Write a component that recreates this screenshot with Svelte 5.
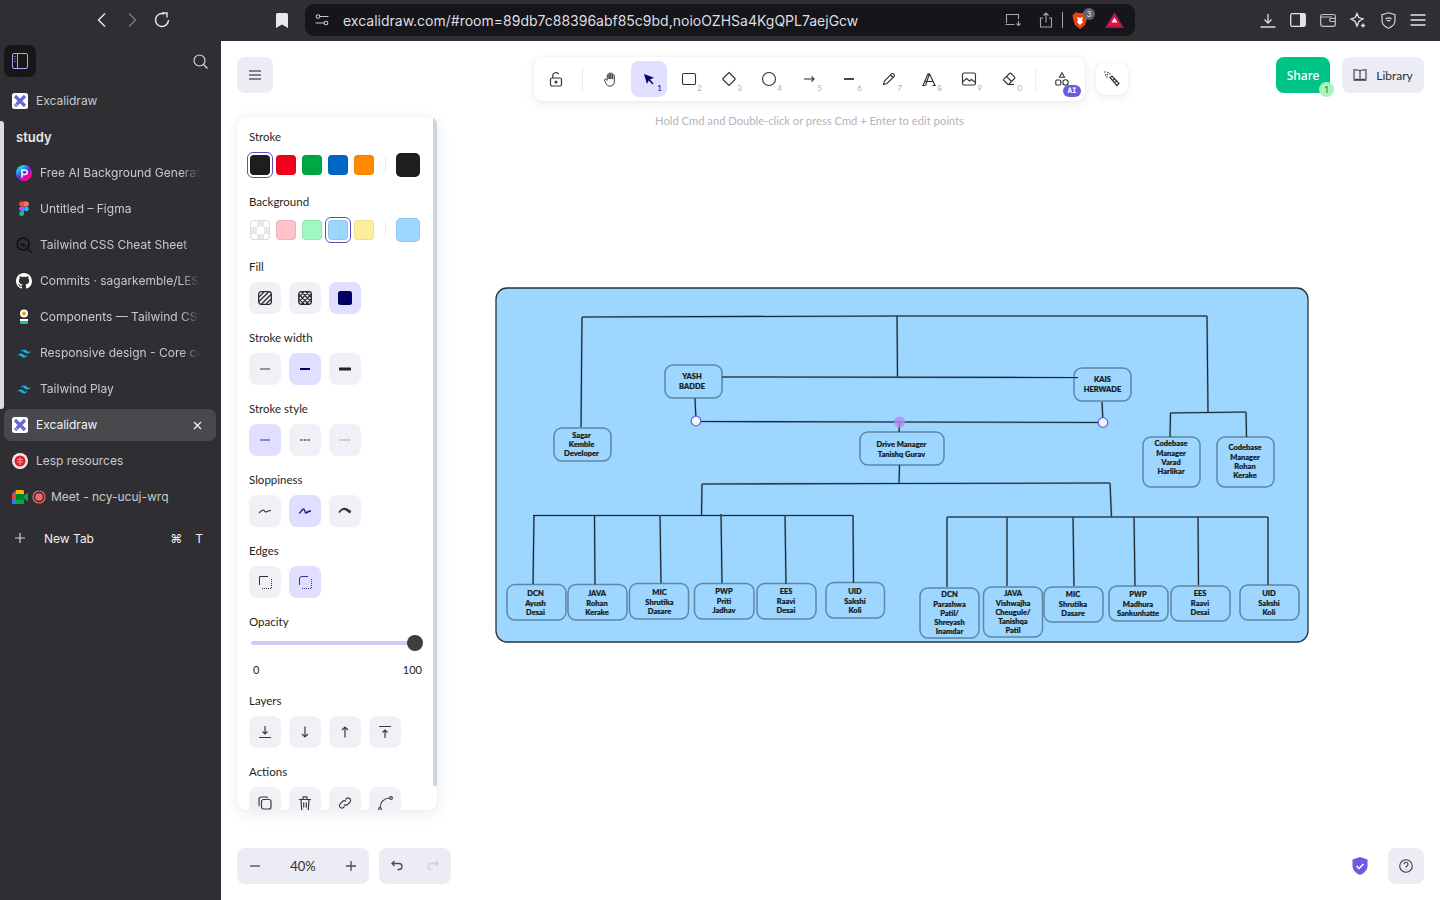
<script>
  const tabs = [
    { kind: 'perplexity', title: 'Free AI Background Generator' },
    { kind: 'figma', title: 'Untitled – Figma' },
    { kind: 'search', title: 'Tailwind CSS Cheat Sheet' },
    { kind: 'github', title: 'Commits · sagarkemble/LESP' },
    { kind: 'components', title: 'Components — Tailwind CSS' },
    { kind: 'tailwind', title: 'Responsive design - Core concepts' },
    { kind: 'tailwind', title: 'Tailwind Play' }
  ];

  const tools = [
    { key: 1, active: true, paths: [] },
    { key: 2, paths: ['M5 4.500h10a1.500 1.500 0 0 1 1.500 1.500v8a1.500 1.500 0 0 1-1.500 1.500H5A1.500 1.500 0 0 1 3.500 14V6A1.500 1.500 0 0 1 5 4.500z'] },
    { key: 3, paths: ['M10 3.500l6 6a.7.7 0 0 1 0 1l-6 6-6-6a.7.7 0 0 1 0-1z'] },
    { key: 4, paths: ['M10 3.500a6.500 6.500 0 1 0 0 13 6.500 6.500 0 0 0 0-13z'] },
    { key: 5, paths: ['M5 10h10', 'M12.500 7.500l2.500 2.500-2.500 2.500'] },
    { key: 6, paths: ['M5 10h10'], thick: true },
    { key: 7, paths: ['M4.500 15.500l1-3.500 7-7a1.300 1.300 0 0 1 2 0l.5.5a1.300 1.300 0 0 1 0 2l-7 7z', 'M11.500 6l2.500 2.500'] },
    { key: 8, text: true, paths: [] },
    { key: 9, paths: ['M5 4h10a1.500 1.500 0 0 1 1.500 1.500v9A1.500 1.500 0 0 1 15 16H5a1.500 1.500 0 0 1-1.500-1.500v-9A1.500 1.500 0 0 1 5 4z', 'M3.500 13l4-3.500 3 2.500 2-1.500 4 3', 'M12.500 7.500h.01'] },
    { key: 0, paths: ['M9 15.500h6', 'M9 15.500L5 11.500a1.200 1.200 0 0 1 0-1.700L10.500 4.500a1.200 1.200 0 0 1 1.700 0l3.300 3.300a1.200 1.200 0 0 1 0 1.700L10 15', 'M7.500 7.500l5 5'] }
  ];

  const strokeColors = ['#1e1e1e', '#f5001c', '#00a844', '#0068c4', '#ff8a00'];
  const bgColors = ['transparent', '#ffc2c8', '#a0f7bf', '#9dd6fe', '#ffee99'];

  const lines = [
    'M582 317L897 316L1207 316', 'M582 317L581 427', 'M897 316L897.500 377', 'M722 377L1078 377.500',
    'M695 398L696 421', 'M696 421.500L899 422L1103 422.500', 'M1102 402L1103 422', 'M899.500 422L899 432',
    'M899.500 465L899 484', 'M1207 316L1208 412', 'M1170 413L1208 412.500L1246 412', 'M1170.500 413L1170 437',
    'M1246 412L1246.500 437', 'M702 484L899 483.500L1110 483', 'M702 484L701.500 516', 'M1110 483L1111.500 517',
    'M533 515.500L853 515.500', 'M534 516L533 584', 'M594.500 515L595 584.500', 'M660 515L661 583', 'M721 514L722 583',
    'M785 515L786 584', 'M853 515L853.500 583', 'M947 517L1268 517', 'M947 517L947 587', 'M1007 517L1007 586',
    'M1073 517L1074 586', 'M1134 517L1135 586', 'M1198 517L1198.500 585', 'M1268 517L1268 585'
  ];

  const boxes = [
    { x: 665, y: 365, r: 722, b: 398 },
    { x: 554, y: 428, r: 611, b: 461 },
    { x: 860, y: 432, r: 944, b: 465 },
    { x: 1074, y: 368, r: 1131, b: 401 },
    { x: 1143, y: 437, r: 1200, b: 487 },
    { x: 1217, y: 437, r: 1274, b: 487 },
    { x: 507, y: 584.500, r: 566, b: 620 },
    { x: 568, y: 584.500, r: 627, b: 620 },
    { x: 629.500, y: 583.500, r: 688.500, b: 619 },
    { x: 694.500, y: 583.500, r: 754, b: 619 },
    { x: 757, y: 583.500, r: 816, b: 619 },
    { x: 826, y: 582.500, r: 884.500, b: 618 },
    { x: 920, y: 588, r: 979, b: 638 },
    { x: 983.500, y: 587, r: 1042.500, b: 637 },
    { x: 1044, y: 587, r: 1103, b: 622 },
    { x: 1109, y: 586, r: 1168, b: 621 },
    { x: 1171, y: 586, r: 1230, b: 621 },
    { x: 1240, y: 585, r: 1299, b: 620 }
  ];

  const labels = [
    { x: 692, rows: [[376, 'YASH'], [386, 'BADDE']] },
    { x: 581.500, rows: [[435, 'Sagar'], [444.500, 'Kemble'], [453.500, 'Developer']] },
    { x: 901.500, rows: [[444, 'Drive Manager'], [454, 'Tanishq Gurav']] },
    { x: 1102.500, rows: [[379, 'KAIS'], [389, 'HERWADE']] },
    { x: 1171, rows: [[443, 'Codebase'], [453, 'Manager'], [462, 'Varad'], [471, 'Harlikar']] },
    { x: 1245, rows: [[447.500, 'Codebase'], [457.500, 'Manager'], [466.500, 'Rohan'], [475.500, 'Kerake']] },
    { x: 535.500, rows: [[593, 'DCN'], [603, 'Ayush'], [612, 'Desai']] },
    { x: 597, rows: [[593, 'JAVA'], [603, 'Rohan'], [612, 'Kerake']] },
    { x: 659.500, rows: [[592, 'MIC'], [602, 'Shrutika'], [611, 'Dasare']] },
    { x: 724, rows: [[591, 'PWP'], [601, 'Priti'], [610, 'Jadhav']] },
    { x: 786, rows: [[591, 'EES'], [601, 'Raavi'], [610, 'Desai']] },
    { x: 855, rows: [[591, 'UID'], [601, 'Sakshi'], [610, 'Koli']] },
    { x: 949.500, rows: [[594, 'DCN'], [604, 'Parashwa'], [613.500, 'Patil/'], [622.500, 'Shreyash'], [631.500, 'Inamdar']] },
    { x: 1013, rows: [[593, 'JAVA'], [603, 'Vishwajha'], [612, 'Cheugule/'], [621, 'Tanishqa'], [630, 'Patil']] },
    { x: 1073, rows: [[594, 'MIC'], [604, 'Shrutika'], [613, 'Dasare']] },
    { x: 1138, rows: [[594, 'PWP'], [604, 'Madhura'], [613, 'Sankunhatte']] },
    { x: 1200, rows: [[593, 'EES'], [603, 'Raavi'], [612, 'Desai']] },
    { x: 1269, rows: [[593, 'UID'], [603, 'Sakshi'], [612, 'Koli']] }
  ];
</script>

{#snippet excalidrawIcon()}
  <svg width="16" height="16" viewBox="0 0 16 16">
    <rect width="16" height="16" rx="2.500" fill="#fff" />
    <path d="M3 3l10 10M13 3L3 13" stroke="#6965db" stroke-width="3.200" />
    <path d="M2 9.500l3 3" stroke="#fff" stroke-width="1" />
  </svg>
{/snippet}

{#snippet favicon(kind)}
  {#if kind === 'perplexity'}
    <svg width="16" height="16" viewBox="0 0 16 16">
      <defs>
        <linearGradient id="pg" x1="0.1" y1="0" x2="0.9" y2="1">
          <stop offset="0.2" stop-color="#10d0f0" />
          <stop offset="0.5" stop-color="#5a30f0" />
          <stop offset="0.75" stop-color="#ff00a0" />
        </linearGradient>
      </defs>
      <circle cx="8" cy="8" r="8" fill="url(#pg)" />
      <path d="M6 12.500V5h3a2.200 2.200 0 0 1 0 4.500H6" fill="none" stroke="#fff" stroke-width="1.500" />
    </svg>
  {:else if kind === 'figma'}
    <svg width="16" height="16" viewBox="0 0 16 16">
      <path d="M8 .5H5.500a2.400 2.400 0 0 0 0 4.900H8z" fill="#f24e1e" />
      <path d="M8 .5h2.500a2.400 2.400 0 0 1 0 4.900H8z" fill="#ff7262" />
      <path d="M8 5.400H5.500a2.400 2.400 0 0 0 0 4.900H8z" fill="#a259ff" />
      <circle cx="10.400" cy="7.900" r="2.400" fill="#1abcfe" />
      <path d="M5.500 10.300H8v2.500a2.400 2.400 0 1 1-2.500-2.500z" fill="#0acf83" />
    </svg>
  {:else if kind === 'search'}
    <svg width="16" height="16" viewBox="0 0 16 16" fill="none" stroke="#0c0c0e" stroke-width="1.300">
      <circle cx="7" cy="7" r="6" />
      <path d="M11.500 11.500L15.500 15.500M4 7.500c1.500-1.500 2.500 0 4-.8M6 9.500c1.500-1.500 2.500 0 4-.8" />
    </svg>
  {:else if kind === 'github'}
    <svg width="16" height="16" viewBox="0 0 16 16" fill="#fff">
      <path d="M8 0C3.580 0 0 3.580 0 8c0 3.540 2.290 6.530 5.470 7.590.4.070.55-.17.55-.38 0-.19-.01-.82-.01-1.490-2.010.37-2.530-.49-2.690-.94-.09-.23-.48-.94-.82-1.130-.28-.15-.68-.52-.01-.53.63-.01 1.080.58 1.230.82.72 1.210 1.870.87 2.330.66.07-.52.28-.87.51-1.070-1.780-.2-3.640-.89-3.640-3.950 0-.87.31-1.590.82-2.150-.08-.2-.36-1.020.08-2.120 0 0 .67-.21 2.200.82.64-.18 1.320-.27 2-.27.68 0 1.360.09 2 .27 1.530-1.040 2.200-.82 2.200-.82.44 1.100.16 1.920.08 2.120.51.56.82 1.270.82 2.150 0 3.070-1.870 3.750-3.650 3.950.29.25.54.73.54 1.480 0 1.070-.01 1.930-.01 2.200 0 .21.15.46.55.38A8.013 8.013 0 0 0 16 8c0-4.420-3.580-8-8-8z" />
    </svg>
  {:else if kind === 'components'}
    <svg width="16" height="16" viewBox="0 0 16 16">
      <circle cx="8" cy="4.500" r="4" fill="#fff" />
      <circle cx="8" cy="4.500" r="2" fill="#f59a23" />
      <rect x="4" y="10" width="8" height="2" fill="#fff" />
      <rect x="4" y="12" width="8" height="3" rx="1" fill="#12c99b" />
    </svg>
  {:else if kind === 'tailwind'}
    <svg width="19" height="19" viewBox="0 0 24 24" fill="#17b4e8">
      <path d="M12 6c-2.670 0-4.330 1.330-5 4 1-1.330 2.170-1.830 3.500-1.500.76.19 1.300.74 1.900 1.350.98 1 2.090 2.150 4.600 2.150 2.670 0 4.330-1.330 5-4-1 1.330-2.170 1.830-3.500 1.500-.76-.19-1.300-.74-1.900-1.350C15.620 7.150 14.510 6 12 6zM7 12c-2.670 0-4.330 1.330-5 4 1-1.330 2.170-1.830 3.500-1.500.76.19 1.300.74 1.900 1.350C8.380 16.850 9.490 18 12 18c2.670 0 4.330-1.330 5-4-1 1.330-2.170 1.830-3.500 1.500-.76-.19-1.300-.74-1.900-1.350C10.620 13.150 9.510 12 7 12z" />
    </svg>
  {/if}
{/snippet}

<div class="app">
  <header class="topbar">
    <div class="nav">
      <span class="ic"><svg width="16" height="16" viewBox="0 0 16 16" fill="none" stroke="#e4e4e8" stroke-width="1.500"><path d="M11 1.500L4.500 8l6.500 6.500" /></svg></span>
      <span class="ic"><svg width="16" height="16" viewBox="0 0 16 16" fill="none" stroke="#77777c" stroke-width="1.500"><path d="M5 1.500L11.500 8 5 14.500" /></svg></span>
      <span class="ic"><svg width="16" height="16" viewBox="0 0 16 16" fill="none" stroke="#e4e4e8" stroke-width="1.500"><path d="M14.500 8A6.500 6.500 0 1 1 10.500 2" /><path d="M9.500.500h5v4.500" stroke-width="1.400" transform="translate(-1.500 .5)" /></svg></span>
    </div>
    <span class="ic bookmark"><svg width="12" height="15" viewBox="0 0 12 15" fill="#e8e8ec"><path d="M1.500 0h9A1.500 1.500 0 0 1 12 1.500V15l-6-3.500L0 15V1.500A1.500 1.500 0 0 1 1.500 0z" /></svg></span>
    <div class="urlbar">
      <svg width="14" height="12" viewBox="0 0 14 12" fill="none" stroke="#c8c8cc" stroke-width="1.100"><circle cx="3" cy="2.500" r="1.800" /><path d="M5 2.500h8.500M.5 9H9" /><circle cx="11" cy="9" r="1.800" /></svg>
      <span class="url">excalidraw.com/#room=89db7c88396abf85c9bd,noioOZHSa4KgQPL7aejGcw</span>
      <div class="url-right">
        <svg class="u-cast" width="17" height="14" viewBox="0 0 17 14" fill="none" stroke="#a5a5aa" stroke-width="1.100"><path d="M1.500 10V1.500h12V6M.5 11.500h9M13.500 8v4.500M11.500 10.500l2 2 2-2" /></svg>
        <svg class="u-share" width="14" height="16" viewBox="0 0 14 16" fill="none" stroke="#a5a5aa" stroke-width="1.100"><path d="M4 6H1.500v9h11V6H10M7 10.500V1M4.500 3.500L7 1l2.500 2.500" /></svg>
        <span class="u-div"></span>
        <span class="brave">
          <svg width="16" height="19" viewBox="0 0 16 19"><path d="M3.500 1L6 2h4l2.500-1L14 3l1.500 1-.5 4-2 6-5 4-5-4-2-6L.5 4 2 3z" fill="#f03e12" /><path d="M5 6l3 1 3-1-1 3 1 2-3 3-3-3 1-2z" fill="#fff" /></svg>
          <span class="brave-badge">3</span>
        </span>
        <svg class="u-bat" width="19" height="16" viewBox="0 0 19 16"><path d="M9.500 0L19 16H0z" fill="#7a1f8a" /><path d="M9.500 2L17 14.500H2z" fill="#e8132b" /><path d="M9.500 5.500L12.500 10.500h-6z" fill="#fff" /></svg>
      </div>
    </div>
    <div class="actions">
      <span class="ic"><svg width="16" height="15" viewBox="0 0 16 15" fill="none" stroke="#dcdce0" stroke-width="1.300"><path d="M8 1v9M4.500 6.500L8 10l3.500-3.500M.5 14h15" /></svg></span>
      <span class="ic"><svg width="16" height="14" viewBox="0 0 16 14"><rect x=".7" y=".7" width="14.600" height="12.600" rx="1.500" fill="none" stroke="#e4e4e8" stroke-width="1.300" /><rect x="10" y="1" width="5" height="12" fill="#e4e4e8" /></svg></span>
      <span class="ic"><svg width="16" height="14" viewBox="0 0 16 14" fill="none" stroke="#c4c4c8" stroke-width="1.200"><rect x=".7" y="1.500" width="14.600" height="11.800" rx="2" /><path d="M1 4h11M15 5.500h-4a1.500 1.500 0 0 0 0 3h4" /></svg></span>
      <span class="ic"><svg width="16" height="16" viewBox="0 0 16 16" fill="none" stroke="#e4e4e8" stroke-width="1.300"><path d="M7 1.500l1.700 4 4.300 1.500-4 2.200L7 14 5 9.200 1 7l4.200-1.500z" /><path d="M13 11.500v4M11 13.500h4" /></svg></span>
      <span class="ic"><svg width="15" height="17" viewBox="0 0 15 17" fill="none" stroke="#d4d4d8" stroke-width="1.200"><path d="M7.500.8l6.500 2v5.700c0 3.500-3 6.300-6.500 7.700C4 14.800 1 12 1 8.500V2.800z" /><path d="M4.500 7c2-1.500 4-1.500 6 0M5.800 9c1-.8 2.400-.8 3.400 0M7.500 11h.01" /></svg></span>
      <span class="ic"><svg width="16" height="12" viewBox="0 0 16 12" stroke="#e4e4e8" stroke-width="1.300"><path d="M.5 1h15M.5 6h15M.5 11h15" /></svg></span>
    </div>
  </header>

  <aside class="sidebar">
    <div class="side-head">
      <span class="toggle">
        <svg width="16" height="16" viewBox="0 0 16 16" fill="none" stroke="#a8a6f2" stroke-width="1"><rect x=".5" y=".5" width="15" height="15" rx="1.500" /><path d="M5.500 1v14" /><path d="M2.500 3.500h1M2.500 6h1M2.500 8.500h1" /></svg>
      </span>
      <svg width="15" height="15" viewBox="0 0 15 15" fill="none" stroke="#d8d8dc" stroke-width="1.200"><circle cx="6.500" cy="6.500" r="5.500" /><path d="M10.500 10.500l4 4" /></svg>
    </div>
    <div class="tab pinned">
      {@render excalidrawIcon()}
      <span class="name">Excalidraw</span>
    </div>
    <div class="group">
      <div class="group-name">study</div>
      {#each tabs as tab}
        <div class="tab nested">
          <span class="fav">{@render favicon(tab.kind)}</span>
          <span class="name title">{tab.title}</span>
        </div>
      {/each}
    </div>
    <div class="tab current">
      {@render excalidrawIcon()}
      <span class="name">Excalidraw</span>
      <svg class="close" width="9" height="9" viewBox="0 0 9 9" stroke="#f0f0f2" stroke-width="1.400"><path d="M1 1l7 7M8 1L1 8" /></svg>
    </div>
    <div class="tab pinned">
      <svg width="16" height="16" viewBox="0 0 16 16"><circle cx="8" cy="8" r="8" fill="#f1e6e0" /><circle cx="8" cy="8" r="5.500" fill="#d8232f" /><path d="M5 6.500h6M5 9h6M8 4v8" stroke="#f1a0a0" stroke-width="1" /></svg>
      <span class="name">Lesp resources</span>
    </div>
    <div class="tab pinned">
      <svg width="16" height="14" viewBox="0 0 16 14"><path d="M0 4l4-4v14H1.500A1.500 1.500 0 0 1 0 12.500z" fill="#2684fc" /><path d="M4 0h6.500A1.500 1.500 0 0 1 12 1.500V4H4z" fill="#ffba00" /><path d="M4 10h8v2.500a1.500 1.500 0 0 1-1.500 1.500H4z" fill="#00ac47" /><path d="M4 4h8v6H4z" fill="#00832d" /><path d="M12 5.500L16 2.500v9l-4-3z" fill="#00ac47" /><path d="M0 4h4v6H0z" fill="#ea4335" /></svg>
      <svg class="rec" width="14" height="14" viewBox="0 0 14 14"><circle cx="7" cy="7" r="6" fill="none" stroke="#f0686a" stroke-width="1.200" /><circle cx="7" cy="7" r="3.800" fill="#f0686a" /></svg>
      <span class="name">Meet - ncy-ucuj-wrq</span>
    </div>
    <div class="newtab">
      <svg width="12" height="12" viewBox="0 0 12 12" stroke="#d0d0d4" stroke-width="1.200"><path d="M6 1v10M1 6h10" /></svg>
      <span class="nt-label">New Tab</span>
      <span class="nt-key">⌘</span>
      <span class="nt-key">T</span>
    </div>
  </aside>

  <main class="canvas">
    <svg class="drawing" viewBox="221 41 1219 859">
      <rect x="496" y="288" width="812" height="354" rx="11" class="frame" />
      {#each boxes as b}
        <rect x={b.x} y={b.y} width={b.r - b.x} height={b.b - b.y} rx="8" class="box" />
      {/each}
      {#each lines as d}
        <path {d} class="wire-under" />
        <path {d} class="wire" />
      {/each}
      {#each labels as l}
        {#each l.rows as row}
          <text x={l.x} y={row[0]} class="label">{row[1]}</text>
        {/each}
      {/each}
      <circle cx="899.500" cy="422" r="5.500" fill="#b58bf0" fill-opacity="0.8" />
      <circle cx="696" cy="421" r="4.800" class="handle" />
      <circle cx="1103" cy="422.500" r="4.800" class="handle" />
    </svg>

    <div class="ui">
      <div class="top">
        <div class="left">
          <button class="sq" aria-label="Menu">
            <svg width="14" height="12" viewBox="0 0 14 12" stroke="#5f5f66" stroke-width="1.600"><path d="M1 2h12M1 6h12M1 10h12" /></svg>
          </button>
          <section class="panel">
            <div class="scroll"></div>
            <h4>Stroke</h4>
            <div class="colors">
              {#each strokeColors as c, i}
                <span class="swatch" class:picked={i === 0} style="background:{c}"></span>
              {/each}
              <span class="sep"></span>
              <span class="swatch big" style="background:#1e1e1e"></span>
            </div>
            <h4>Background</h4>
            <div class="colors">
              {#each bgColors as c, i}
                <span class="swatch" class:picked={i === 3} class:checker={i === 0} style="background-color:{c}"></span>
              {/each}
              <span class="sep"></span>
              <span class="swatch big" style="background:#9dd6fe"></span>
            </div>
            <h4>Fill</h4>
            <div class="btns">
              <button class="opt" aria-label="Hachure">
                <svg width="14" height="14" viewBox="0 0 14 14" fill="none" stroke="#2b2b2f"><rect x=".7" y=".7" width="12.600" height="12.600" rx="2.500" stroke-width="1.300" /><path d="M1 6l5-5M1 10.500L10.500 1M3.500 13L13 3.500M8 13l5-5" stroke-width="1.300" /></svg>
              </button>
              <button class="opt" aria-label="Cross hatch">
                <svg width="14" height="14" viewBox="0 0 14 14" fill="none" stroke="#2b2b2f"><rect x=".7" y=".7" width="12.600" height="12.600" rx="2.500" stroke-width="1.300" /><path d="M1 6l5-5M1 10.500L10.500 1M3.500 13L13 3.500M8 13l5-5M8 1l5 5M3.500 1L13 10.500M1 3.500L10.500 13M1 8l5 5" stroke-width="1.200" /></svg>
              </button>
              <button class="opt on" aria-label="Solid">
                <svg width="14" height="14" viewBox="0 0 14 14"><rect width="14" height="14" rx="2.500" fill="#030064" /></svg>
              </button>
            </div>
            <h4>Stroke width</h4>
            <div class="btns">
              <button class="opt" aria-label="Thin"><svg width="12" height="4" viewBox="0 0 12 4"><path d="M1 2h10" stroke="#77777d" stroke-width="1.500" /></svg></button>
              <button class="opt on" aria-label="Bold"><svg width="12" height="4" viewBox="0 0 12 4"><path d="M1 2h10" stroke="#030064" stroke-width="2" /></svg></button>
              <button class="opt" aria-label="Extra bold"><svg width="12" height="4" viewBox="0 0 12 4"><path d="M1 2h10" stroke="#222226" stroke-width="3.200" stroke-linecap="round" /></svg></button>
            </div>
            <h4>Stroke style</h4>
            <div class="btns">
              <button class="opt on" aria-label="Solid"><svg width="12" height="4" viewBox="0 0 12 4"><path d="M1 2h10" stroke="#6f66b8" stroke-width="1.500" /></svg></button>
              <button class="opt" aria-label="Dashed"><svg width="12" height="4" viewBox="0 0 12 4"><path d="M1 2h10" stroke="#55555b" stroke-width="1.300" stroke-dasharray="2.500 1.200" /></svg></button>
              <button class="opt" aria-label="Dotted"><svg width="12" height="4" viewBox="0 0 12 4"><path d="M1 2h11" stroke="#55555b" stroke-width="1.200" stroke-dasharray="1 1.200" /></svg></button>
            </div>
            <h4>Sloppiness</h4>
            <div class="btns">
              <button class="opt" aria-label="Architect"><svg width="14" height="8" viewBox="0 0 14 8" fill="none"><path d="M1 6c1.500-1 3-3.500 4.500-3s1 2.500 2.500 2 2-1.500 5-1.500" stroke="#2e2e33" stroke-width="1.100" /></svg></button>
              <button class="opt on" aria-label="Artist"><svg width="14" height="8" viewBox="0 0 14 8" fill="none"><path d="M1 6.500C3 5 4 2 5.500 2S6.500 5.500 8 5.500 10 3.500 13 4M1.500 6C3.500 4.500 4.500 1.500 6 2.500s.5 3.500 2 3.500 2.500-2 4.500-1.500" stroke="#2a1f80" stroke-width="1.300" /></svg></button>
              <button class="opt" aria-label="Cartoonist"><svg width="14" height="8" viewBox="0 0 14 8" fill="none"><path d="M1 5.500C3 2.500 6 1 8.500 2s3 2 4.500 2.500M1.500 4.500C4 2 7 2 9 3.500s1.500 2 3.500 2" stroke="#333338" stroke-width="1.500" /></svg></button>
            </div>
            <h4>Edges</h4>
            <div class="btns">
              <button class="opt" aria-label="Sharp"><svg width="13" height="13" viewBox="0 0 13 13" fill="none" stroke="#333338" stroke-width="1"><path d="M.5 9V.5H9" /><path d="M12.500 3v9.500H3M.5 12.500v-.01M12.500 .5v.01" stroke-dasharray="1 1" /></svg></button>
              <button class="opt on" aria-label="Round"><svg width="13" height="13" viewBox="0 0 13 13" fill="none" stroke="#3a2f98" stroke-width="1"><path d="M.5 9V3A2.500 2.500 0 0 1 3 .5h6" /><path d="M12.500 3v9.500H3M.5 12.500v-.01M12.500 .5v.01" stroke-dasharray="1 1" /></svg></button>
            </div>
            <h4>Opacity</h4>
            <div class="opacity">
              <div class="range">
                <span class="track"></span>
                <span class="thumb"></span>
              </div>
              <div class="scale"><span>0</span><span>100</span></div>
            </div>
            <h4>Layers</h4>
            <div class="btns">
              <button class="opt" aria-label="Send to back"><svg width="14" height="14" viewBox="0 0 14 14" fill="none" stroke="#3a3a3f" stroke-width="1.200"><path d="M7 1v7.500M4.500 6.500L7 9l2.500-2.500M1 12.500h12" /></svg></button>
              <button class="opt" aria-label="Send backward"><svg width="14" height="14" viewBox="0 0 14 14" fill="none" stroke="#3a3a3f" stroke-width="1.200"><path d="M7 1.500v10.500M4 9l3 3 3-3" /></svg></button>
              <button class="opt" aria-label="Bring forward"><svg width="14" height="14" viewBox="0 0 14 14" fill="none" stroke="#3a3a3f" stroke-width="1.200"><path d="M7 12.500V2M4 5l3-3 3 3" /></svg></button>
              <button class="opt" aria-label="Bring to front"><svg width="14" height="14" viewBox="0 0 14 14" fill="none" stroke="#3a3a3f" stroke-width="1.200"><path d="M1 1.500h12M7 13V5M4.500 7.500L7 5l2.500 2.500" /></svg></button>
            </div>
            <h4>Actions</h4>
            <div class="btns">
              <button class="opt" aria-label="Duplicate"><svg width="14" height="14" viewBox="0 0 14 14" fill="none" stroke="#3a3a3f" stroke-width="1.200"><rect x="3.500" y="3.500" width="9.500" height="9.500" rx="2" /><path d="M10 1.500Q9.500 1 8 1H3a2 2 0 0 0-2 2v5q0 1.500 .5 2" /></svg></button>
              <button class="opt" aria-label="Delete"><svg width="14" height="15" viewBox="0 0 14 15" fill="none" stroke="#3a3a3f" stroke-width="1.200"><path d="M1 3.500h12M3 3.500l.7 10q0 1 1 1h4.600q1 0 1-1l.7-10M5 3.500V1.500q0-.7.7-.7h2.600q.7 0 .7.7v2M5.700 6.500v5M8.300 6.500v5" /></svg></button>
              <button class="opt" aria-label="Link"><svg width="14" height="14" viewBox="0 0 14 14" fill="none" stroke="#3a3a3f" stroke-width="1.100"><path d="M6 8.500a2.500 2.500 0 0 0 3.500 0l2.500-2.500A2.500 2.500 0 0 0 8.500 2.500L7.500 3.500" /><path d="M8 5.500a2.500 2.500 0 0 0-3.500 0L2 8a2.500 2.500 0 0 0 3.500 3.500l1-1" /></svg></button>
              <button class="opt" aria-label="Edit line"><svg width="15" height="15" viewBox="0 0 15 15" fill="none" stroke="#3a3a3f" stroke-width="1.100"><circle cx="2" cy="13" r="1.400" /><circle cx="13" cy="2" r="1.400" /><path d="M2 11.500C2.500 6 6 2.500 11.500 2" /></svg></button>
            </div>
          </section>
        </div>

        <div class="tool-col">
          <div class="toolbar">
            <button class="tool" aria-label="Lock">
              <svg width="14" height="15" viewBox="0 0 14 15" fill="none" stroke="#333338" stroke-width="1.200"><rect x="1.500" y="6" width="11" height="8" rx="1.800" /><path d="M3.800 6V3.800a3.200 3.200 0 0 1 6-1.500" /><circle cx="7" cy="10" r=".9" fill="#333338" /></svg>
            </button>
            <span class="tool-div"></span>
            <button class="tool" aria-label="Hand">
              <svg width="13" height="15" viewBox="0 0 13 17" fill="none" stroke="#333338" stroke-width="1.100"><path d="M4 9V3.500a1 1 0 0 1 2 0V8M6 8V2a1 1 0 0 1 2 0v6M8 8V2.500a1 1 0 0 1 2 0V8M10 8V4a1 1 0 0 1 2 0v7c0 3-2 5-5 5-2.500 0-3.500-1-5-4L.8 9.500c-.5-1.200 1-2 2-1L4 10" /></svg>
            </button>
            {#each tools as t}
              <button class="tool" class:selected={t.active} aria-label="Tool {t.key}">
                {#if t.active}
                  <svg width="12" height="12" viewBox="0 0 12 12" fill="#030064"><path d="M1 1l10 3.800-4 1.700 3.500 4-1 1-3.800-4L4 11z" /></svg>
                {:else if t.text}
                  <svg width="14" height="13" viewBox="0 0 14 13" fill="none" stroke="#2c2c30" stroke-width="1.100"><path d="M1 12.500L6 .8h1.500L13 12.500M3.200 8.500h7.500M.2 12.500h2.800M10.500 12.500h3.300M3.500 12.500L7.500 .8" /></svg>
                {:else}
                  <svg width="20" height="20" viewBox="0 0 20 20" fill="none" stroke="#333338" stroke-width={t.thick ? 1.800 : 1.100}>
                    {#each t.paths as d}
                      <path {d} />
                    {/each}
                  </svg>
                {/if}
                <span class="hotkey">{t.key}</span>
              </button>
            {/each}
            <span class="tool-div"></span>
            <button class="tool" aria-label="More tools">
              <svg width="14" height="14" viewBox="0 0 14 14" fill="none" stroke="#333338" stroke-width="1.100"><path d="M7 .8l2.500 4.500h-5z" /><rect x=".8" y="8" width="5" height="5" rx="1" /><circle cx="10.500" cy="10.500" r="2.700" /></svg>
              <span class="ai">AI</span>
            </button>
          </div>
          <p class="hint">Hold Cmd and Double-click or press Cmd + Enter to edit points</p>
        </div>

        <button class="wand" aria-label="Magic">
          <svg width="16" height="16" viewBox="0 0 16 16" fill="none" stroke="#333338"><path d="M6 6.500l2-1.500 7 7.500-2 2z" fill="#fff" stroke-width="1.200" /><path d="M9 9l2-1.500M11 11l2-1.500" stroke-width="1.100" /><path d="M1 1h.01M4 1.500h.01M1.500 4h.01M3.500 3.500h.01M6 3h.01M3 6h.01" stroke-width="1.500" stroke-linecap="round" /></svg>
        </button>

        <div class="top-right">
          <button class="share">
            Share
            <span class="count">1</span>
          </button>
          <button class="library">
            <svg width="14" height="12" viewBox="0 0 14 12" fill="none" stroke="#3a3a3f" stroke-width="1.100"><path d="M7 2v9.500M7 2C6 1 4 .8 1 .8v9.200c3 0 5 .3 6 1.200 1-.9 3-1.200 6-1.200V.8C10 .8 8 1 7 2zM.5 11.300h13" /></svg>
            Library
          </button>
        </div>
      </div>

      <div class="bottom">
        <div class="pill zoom">
          <button class="pbtn" aria-label="Zoom out"><svg width="12" height="12" viewBox="0 0 12 12" stroke="#4a4a50" stroke-width="1.300"><path d="M1 6h10" /></svg></button>
          <span class="pct">40%</span>
          <button class="pbtn" aria-label="Zoom in"><svg width="12" height="12" viewBox="0 0 12 12" stroke="#4a4a50" stroke-width="1.300"><path d="M1 6h10M6 1v10" /></svg></button>
        </div>
        <div class="pill undo">
          <button class="pbtn" aria-label="Undo"><svg width="12" height="12" viewBox="0 0 12 12" fill="none" stroke="#4a4a50" stroke-width="1.300"><path d="M3.500 1L1 3.500 3.500 6M1 3.500h7a3 3 0 0 1 3 3v0a3 3 0 0 1-3 3H6.500" /></svg></button>
          <button class="pbtn" aria-label="Redo"><svg width="12" height="12" viewBox="0 0 12 12" fill="none" stroke="#cfcfd6" stroke-width="1.300"><path d="M8.500 1L11 3.500 8.500 6M11 3.500H4a3 3 0 0 0-3 3v0a3 3 0 0 0 3 3h1.500" /></svg></button>
        </div>
        <svg class="shield" width="16" height="18" viewBox="0 0 16 18"><path d="M8 0l7.500 2.500v6.500c0 4-3.500 7.300-7.500 9C4 16.300.5 13 .5 9V2.500z" fill="#6a5be0" /><path d="M4.500 9l2.500 2.500L11.500 7" fill="none" stroke="#fff" stroke-width="1.500" /></svg>
        <button class="sq help" aria-label="Help">
          <svg width="14" height="14" viewBox="0 0 14 14" fill="none" stroke="#3a3a3f" stroke-width="1.100"><circle cx="7" cy="7" r="6.300" /><path d="M5 5.300a2 2 0 1 1 3 1.700c-.7.400-1 .8-1 1.500M7 10.500v.5" /></svg>
        </button>
      </div>
    </div>
  </main>
</div>

<style>
  :global(body) {
    margin: 0;
    background: #2f2f33;
  }

  button {
    border: 0;
    padding: 0;
    margin: 0;
    font: inherit;
    display: flex;
    align-items: center;
    justify-content: center;
  }

  .app {
    display: grid;
    grid-template-columns: 221px 1fr;
    grid-template-rows: 41px 859px;
    width: 1440px;
    height: 900px;
    overflow: hidden;
    background: #2f2f33;
    font-family: Inter, "Liberation Sans", sans-serif;
  }

  .topbar {
    grid-column: 1 / 3;
    display: flex;
    align-items: flex-start;
    padding: 4px 0 0 87px;
  }

  .nav,
  .actions {
    display: flex;
  }

  .ic {
    display: flex;
    width: 30px;
    height: 32px;
    align-items: center;
    justify-content: center;
  }

  .bookmark {
    margin-left: 90px;
  }

  .urlbar {
    position: relative;
    display: flex;
    align-items: center;
    width: 830px;
    height: 32px;
    margin-left: 8px;
    padding-left: 10px;
    box-sizing: border-box;
    border-radius: 9px;
    background: #15151a;
    color: #dedee2;
  }

  .url {
    margin-left: 14px;
    font-size: 14px;
    white-space: nowrap;
  }

  .url-right {
    display: flex;
    align-items: center;
    margin-left: auto;
    padding-right: 11px;
  }

  .u-share {
    margin-left: 17px;
  }

  .u-div {
    width: 1px;
    height: 16px;
    margin: 0 9px;
    background: #a5a5aa;
  }

  .brave {
    position: relative;
    display: flex;
  }

  .brave-badge {
    position: absolute;
    top: -3px;
    left: 11px;
    width: 12px;
    height: 12px;
    border-radius: 50%;
    background: #62626a;
    color: #e4e4e8;
    font-size: 8px;
    line-height: 12px;
    text-align: center;
  }

  .u-bat {
    margin-left: 17px;
  }

  .actions {
    margin-left: 118px;
  }

  .sidebar {
    display: flex;
    flex-direction: column;
    padding-top: 4px;
    color: #c9c9cd;
    font-size: 12px;
  }

  .side-head {
    display: flex;
    align-items: center;
    justify-content: space-between;
    height: 32px;
    padding: 0 13px 0 4px;
    margin-bottom: 6px;
  }

  .toggle {
    display: flex;
    width: 32px;
    height: 32px;
    align-items: center;
    justify-content: center;
    border-radius: 7px;
    background: #17171a;
  }

  .tab {
    display: flex;
    align-items: center;
    gap: 8px;
    height: 36px;
    white-space: nowrap;
  }

  .name {
    margin-bottom: 2px;
  }

  .pinned,
  .current {
    padding-left: 12px;
  }

  .group {
    position: relative;
    height: 288px;
    margin-top: 2px;
    flex: none;
  }

  .group::before {
    content: "";
    position: absolute;
    left: 0;
    top: 0;
    bottom: 0;
    width: 4px;
    border-radius: 0 3px 3px 0;
    background: #dcdce0;
  }

  .group-name {
    height: 34px;
    padding-left: 16px;
    color: #e6e6ea;
    font-size: 13px;
    font-weight: 600;
    line-height: 32px;
  }

  .nested {
    padding-left: 16px;
  }

  .fav {
    display: flex;
    width: 16px;
    justify-content: center;
    flex: none;
  }

  .title {
    width: 160px;
    overflow: hidden;
    -webkit-mask-image: linear-gradient(to right, #000 88%, transparent 100%);
    mask-image: linear-gradient(to right, #000 88%, transparent 100%);
  }

  .current {
    position: relative;
    height: 32px;
    margin: 0 5px 0 4px;
    padding-left: 8px;
    border-radius: 7px;
    background: #48484d;
    color: #f2f2f4;
  }

  .current + .pinned {
    margin-top: 2px;
  }

  .close {
    margin-left: auto;
    margin-right: 14px;
  }

  .rec {
    margin: 0 -3px 0 -4px;
  }

  .newtab {
    display: flex;
    align-items: center;
    height: 36px;
    margin-top: 5px;
    padding-left: 14px;
    color: #eeeef0;
  }

  .nt-label {
    margin-left: 18px;
  }

  .nt-key {
    margin-left: auto;
    margin-right: 13px;
    font-size: 12px;
  }

  .nt-key + .nt-key {
    margin-left: 0;
    margin-right: 18px;
  }

  .canvas {
    position: relative;
    background: #fff;
    color: #1b1b1f;
    font-family: Lato, "Noto Sans", sans-serif;
  }

  .drawing {
    position: absolute;
    left: 0;
    top: 0;
    width: 1219px;
    height: 859px;
  }

  .frame {
    fill: #9dd6fe;
    stroke: #26333d;
    stroke-width: 1.300;
  }

  .box {
    fill: none;
    stroke: #5d87a6;
    stroke-width: 1.500;
  }

  .wire-under {
    fill: none;
    stroke: #5d87a6;
    stroke-width: 2;
    stroke-opacity: 0.6;
  }

  .wire {
    fill: none;
    stroke: #1c262e;
    stroke-width: 1.100;
  }

  .label {
    font-family: Lato, sans-serif;
    font-size: 7.500px;
    font-weight: 900;
    fill: #151b20;
    stroke: #151b20;
    stroke-width: 0.2;
    text-anchor: middle;
    dominant-baseline: central;
  }

  .handle {
    fill: #f4f4fb;
    stroke: #6965db;
    stroke-width: 1.300;
  }

  .ui {
    position: absolute;
    inset: 0;
    display: flex;
    flex-direction: column;
    justify-content: space-between;
    padding: 16px;
    box-sizing: border-box;
    pointer-events: none;
  }

  .top {
    display: flex;
    align-items: flex-start;
  }

  .left {
    display: flex;
    flex-direction: column;
    align-items: flex-start;
    gap: 24px;
    width: 200px;
  }

  .sq {
    width: 36px;
    height: 36px;
    border-radius: 8px;
    background: #ececf4;
  }

  .panel {
    position: relative;
    box-sizing: border-box;
    width: 200px;
    height: 693px;
    padding: 11px 12px 0;
    overflow: hidden;
    border-radius: 8px;
    background: #fff;
    box-shadow: 0 0 1px rgba(0, 0, 0, 0.17), 0 4px 16px rgba(0, 0, 0, 0.08);
  }

  .scroll {
    position: absolute;
    top: 0;
    right: 0;
    width: 4px;
    height: 669px;
    background: #cdd5dd;
  }

  h4 {
    height: 18px;
    margin: 0 0 6px;
    color: #1f1f24;
    font-size: 11.500px;
    font-weight: 400;
    line-height: 18px;
  }

  .colors {
    display: flex;
    align-items: center;
    height: 26px;
    margin-bottom: 15px;
    gap: 6px;
  }

  .swatch {
    position: relative;
    box-sizing: border-box;
    width: 20px;
    height: 20px;
    border-radius: 4px;
    box-shadow: inset 0 0 0 1px rgba(0, 0, 0, 0.07);
    flex: none;
  }

  .colors .swatch:first-child {
    margin-left: 1px;
  }

  .picked::after {
    content: "";
    position: absolute;
    inset: -3px;
    border: 1px solid #5b4fc4;
    border-radius: 6px;
  }

  .checker {
    background-image: conic-gradient(#e8e8ea 25%, #fff 0 50%, #e8e8ea 0 75%, #fff 0);
    background-size: 14px 14px;
    box-shadow: inset 0 0 0 1px #dcdce0;
  }

  .sep {
    width: 1px;
    height: 16px;
    margin-left: 5px;
    background: #ececf0;
  }

  .big {
    width: 24px;
    height: 24px;
    margin-left: 4px;
    border-radius: 5px;
  }

  .btns {
    display: flex;
    gap: 8px;
    margin-bottom: 15px;
  }

  .opt {
    width: 32px;
    height: 32px;
    border-radius: 8px;
    background: #f1f0f6;
  }

  .on {
    background: #e0dfff;
  }

  .opacity {
    height: 40px;
    margin-bottom: 15px;
  }

  .range {
    position: relative;
    height: 12px;
  }

  .track {
    position: absolute;
    left: 2px;
    right: 10px;
    top: 4px;
    height: 4px;
    border-radius: 2px;
    background: #d0c9fb;
  }

  .thumb {
    position: absolute;
    right: 2px;
    top: -2px;
    width: 16px;
    height: 16px;
    border-radius: 50%;
    background: #3d3d42;
  }

  .scale {
    display: flex;
    justify-content: space-between;
    padding: 13px 3px 0 4px;
    font-size: 11px;
    line-height: 16px;
  }

  .tool-col {
    margin-left: 97px;
  }

  .toolbar {
    display: flex;
    align-items: center;
    gap: 4px;
    box-sizing: border-box;
    width: 551px;
    height: 44px;
    padding: 0 5px 0 4px;
    border-radius: 8px;
    background: #fff;
    box-shadow: 0 0 1px rgba(0, 0, 0, 0.17), 0 3px 12px rgba(0, 0, 0, 0.08);
  }

  .tool {
    position: relative;
    width: 36px;
    height: 36px;
    border-radius: 8px;
    background: transparent;
  }

  .selected {
    background: #e0dfff;
  }

  .tool-div {
    width: 1px;
    height: 24px;
    margin: 0 4px;
    background: #ececf4;
  }

  .hotkey {
    position: absolute;
    right: 5px;
    bottom: 4px;
    color: #aeaeb4;
    font-size: 8px;
    line-height: 10px;
  }

  .selected .hotkey {
    color: #030064;
  }

  .ai {
    position: absolute;
    right: -1px;
    bottom: 0;
    width: 18px;
    height: 12px;
    border-radius: 6px;
    background: #6a5be0;
    color: #fff;
    font-family: "DejaVu Sans Mono", monospace;
    font-size: 7.500px;
    font-weight: 700;
    line-height: 12px;
  }

  .hint {
    margin: 12px 0 0;
    color: #b4b4ba;
    font-size: 11.200px;
    line-height: 16px;
    text-align: center;
  }

  .wand {
    width: 32px;
    height: 32px;
    margin: 6px 0 0 11px;
    border-radius: 8px;
    background: #fff;
    box-shadow: 0 0 1px rgba(0, 0, 0, 0.17), 0 2px 8px rgba(0, 0, 0, 0.08);
  }

  .top-right {
    display: flex;
    gap: 12px;
    margin-left: auto;
  }

  .share {
    position: relative;
    width: 54px;
    height: 36px;
    border-radius: 8px;
    background: #00c388;
    color: #fff;
    font-family: "Noto Sans", sans-serif;
    font-size: 12px;
    font-weight: 500;
  }

  .count {
    position: absolute;
    right: -4px;
    bottom: -4px;
    width: 15px;
    height: 15px;
    border-radius: 50%;
    background: #a6f5bd;
    color: #0c8a5c;
    font-size: 9px;
    line-height: 15px;
    text-align: center;
  }

  .library {
    gap: 9px;
    width: 82px;
    height: 36px;
    border-radius: 8px;
    background: #ececf4;
    color: #2e2e33;
    font-size: 12px;
  }

  .bottom {
    display: flex;
    align-items: center;
  }

  .pill {
    display: flex;
    align-items: center;
    height: 36px;
    border-radius: 8px;
    background: #ececf4;
  }

  .zoom {
    width: 132px;
    justify-content: space-between;
  }

  .undo {
    width: 72px;
    margin-left: 10px;
  }

  .pbtn {
    width: 36px;
    height: 36px;
    background: transparent;
  }

  .pct {
    color: #2e2e33;
    font-size: 13px;
  }

  .shield {
    margin-left: auto;
    margin-right: 20px;
  }

  .help {
    flex: none;
  }
</style>
